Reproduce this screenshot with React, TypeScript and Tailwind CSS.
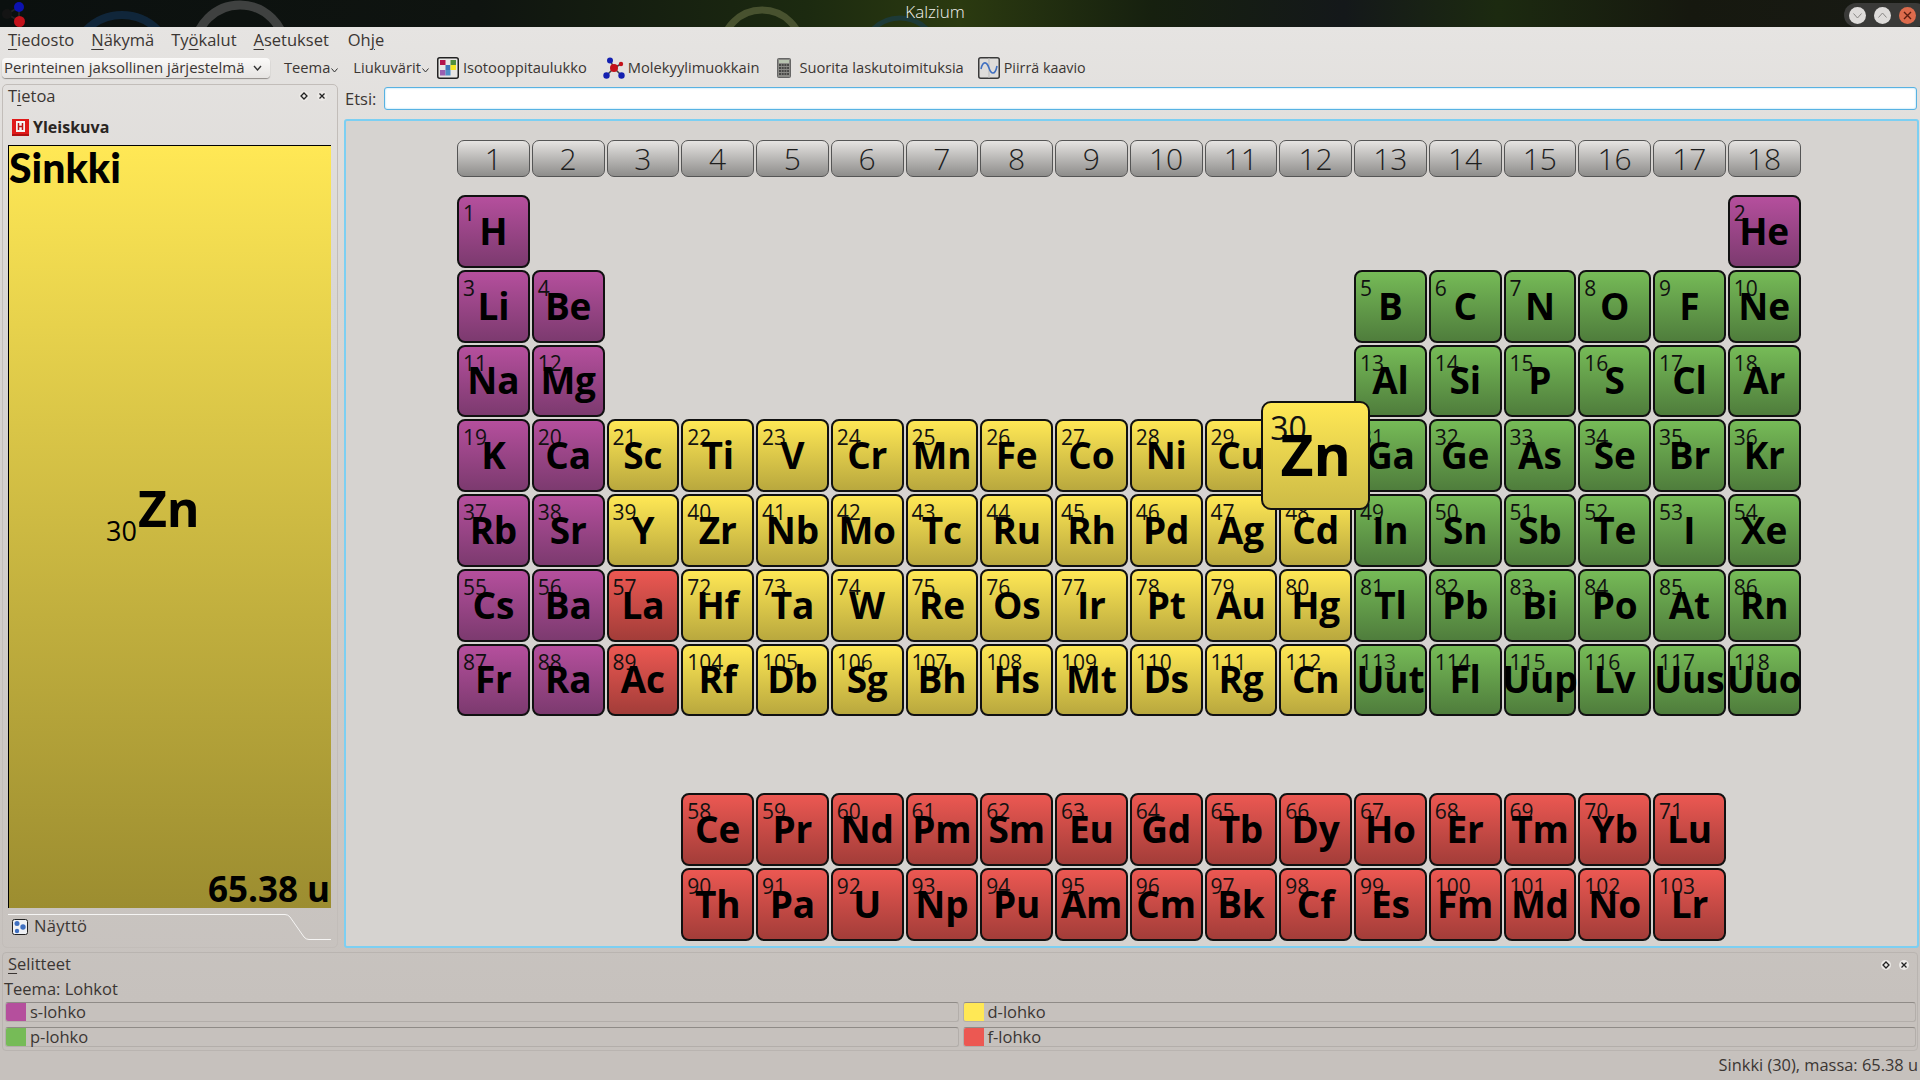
// Kalzium: jaksollinen järjestelmä
import type { ReactNode } from "react";

type Block = "s" | "p" | "d" | "f";
type Element = { sym: string; num: number; block: Block; row: number; col: number };

const BLOCK_BG: Record<Block, string> = {
  s: "bg-gradient-to-b from-[#b54f9d] to-[#7c3a6f]",
  p: "bg-gradient-to-b from-[#76bb57] to-[#4f7d3c]",
  d: "bg-gradient-to-b from-[#ffe855] to-[#b9a83e]",
  f: "bg-gradient-to-b from-[#ec5852] to-[#a33d39]",
};

const row = (r: number, startCol: number, startNum: number, block: Block, syms: string): Element[] =>
  syms.split(" ").map((sym, i) => ({ sym, num: startNum + i, block, row: r, col: startCol + i }));

const ELEMENTS: Element[] = [
  { sym: "H", num: 1, block: "s", row: 1, col: 1 },
  { sym: "He", num: 2, block: "s", row: 1, col: 18 },
  ...row(2, 1, 3, "s", "Li Be"),
  ...row(2, 13, 5, "p", "B C N O F Ne"),
  ...row(3, 1, 11, "s", "Na Mg"),
  ...row(3, 13, 13, "p", "Al Si P S Cl Ar"),
  ...row(4, 1, 19, "s", "K Ca"),
  ...row(4, 3, 21, "d", "Sc Ti V Cr Mn Fe Co Ni Cu Zn"),
  ...row(4, 13, 31, "p", "Ga Ge As Se Br Kr"),
  ...row(5, 1, 37, "s", "Rb Sr"),
  ...row(5, 3, 39, "d", "Y Zr Nb Mo Tc Ru Rh Pd Ag Cd"),
  ...row(5, 13, 49, "p", "In Sn Sb Te I Xe"),
  ...row(6, 1, 55, "s", "Cs Ba"),
  { sym: "La", num: 57, block: "f", row: 6, col: 3 },
  ...row(6, 4, 72, "d", "Hf Ta W Re Os Ir Pt Au Hg"),
  ...row(6, 13, 81, "p", "Tl Pb Bi Po At Rn"),
  ...row(7, 1, 87, "s", "Fr Ra"),
  { sym: "Ac", num: 89, block: "f", row: 7, col: 3 },
  ...row(7, 4, 104, "d", "Rf Db Sg Bh Hs Mt Ds Rg Cn"),
  ...row(7, 13, 113, "p", "Uut Fl Uup Lv Uus Uuo"),
  ...row(9, 4, 58, "f", "Ce Pr Nd Pm Sm Eu Gd Tb Dy Ho Er Tm Yb Lu"),
  ...row(10, 4, 90, "f", "Th Pa U Np Pu Am Cm Bk Cf Es Fm Md No Lr"),
];

const GROUPS = Array.from({ length: 18 }, (_, i) => i + 1);

// Alaviivattu pikanäppäin valikoissa
function Mnemonic({ pre = "", ch, post }: { pre?: string; ch: string; post: string }) {
  return (
    <span>
      {pre}
      <span className="underline decoration-1 underline-offset-[3px]">{ch}</span>
      {post}
    </span>
  );
}

function ElementCell({ el }: { el: Element }) {
  const selected = el.sym === "Zn";
  return (
    <div
      className={`relative flex items-center justify-center rounded-[8px] border-2 border-[#111] ${BLOCK_BG[el.block]}`}
      style={{ gridRow: el.row, gridColumn: el.col }}
    >
      <span className="absolute left-[4px] top-[3px] text-[21px] leading-[26px] text-[#111]">{el.num}</span>
      <span className="relative top-[-1px] whitespace-nowrap text-[37px] font-bold leading-none tracking-[-0.2px] text-black">{el.sym}</span>
      {selected && (
        <div className="absolute -inset-[20px] z-10 flex items-center justify-center rounded-[10px] border-2 border-[#111] bg-gradient-to-b from-[#ffe855] to-[#cdbb46]">
          <span className="absolute left-[7px] top-[5px] text-[32px] leading-[40px] text-[#111]">30</span>
          <span className="relative top-[-1px] text-[57px] font-bold leading-none text-black">Zn</span>
        </div>
      )}
    </div>
  );
}

function DockButtons() {
  return (
    <div className="flex items-center gap-[8px]">
      <svg width="10" height="10" viewBox="0 0 10 10">
        <circle cx="5" cy="5" r="5" fill="#ece9e6" />
        <path d="M5 2 L8 5 L5 8 L2 5 Z" fill="none" stroke="#222" strokeWidth="1.3" />
      </svg>
      <svg width="10" height="10" viewBox="0 0 10 10">
        <circle cx="5" cy="5" r="5" fill="#ece9e6" />
        <path d="M2.5 2.5 L7.5 7.5 M7.5 2.5 L2.5 7.5" stroke="#222" strokeWidth="1.3" />
      </svg>
    </div>
  );
}

function WinButton({ close, children }: { close?: boolean; children: ReactNode }) {
  return (
    <div className={`flex h-[17px] w-[17px] items-center justify-center rounded-full ${close ? "bg-[#dd6b4c]" : "bg-[#dedcda]"}`}>
      {children}
    </div>
  );
}

function TitleBar() {
  return (
    <div className="relative flex h-[27px] shrink-0 items-center justify-center overflow-hidden bg-[linear-gradient(90deg,#0b100f_0%,#0f1410_25%,#1c2a10_42%,#2b3a10_50%,#16200f_60%,#14181a_70%,#1c2a10_78%,#16180f_88%,#181a14_100%)]">
      {/* обои за заголовком */}
      <svg className="absolute left-0 top-0" width="1920" height="27" viewBox="0 0 1920 27">
        <circle cx="240" cy="50" r="45" fill="none" stroke="#3f4140" strokeWidth="9" />
        <circle cx="122" cy="65" r="50" fill="none" stroke="#10263a" strokeWidth="8" />
        <circle cx="762" cy="50" r="40" fill="none" stroke="#48522f" strokeWidth="7" />
        <circle cx="900" cy="56" r="38" fill="none" stroke="#1d3a38" strokeWidth="5" />
      </svg>
      <svg className="absolute left-0 top-0" width="26" height="27" viewBox="0 0 26 27">
        <path d="M7 14 L19 7 M7 14 L19 21 M19 7 L19 21" stroke="#222" strokeWidth="2" />
        <circle cx="7" cy="14" r="5" fill="#141414" />
        <circle cx="19" cy="7" r="5" fill="#0c12b0" />
        <circle cx="19.5" cy="21.5" r="5.5" fill="#c4121a" />
      </svg>
      <span className="relative mb-[3px] mr-[50px] text-[17px] font-light text-[#f2f2f0]">Kalzium</span>
      <div className="absolute right-[-8px] top-[3px] flex h-[24px] items-center gap-[8px] rounded-full bg-[#3a3a38] pl-[5px] pr-[12px]">
        <WinButton>
          <svg width="11" height="11" viewBox="0 0 11 11"><path d="M1.5 3.5 L5.5 8 L9.5 3.5" fill="none" stroke="#8a8886" strokeWidth="1" /></svg>
        </WinButton>
        <WinButton>
          <svg width="11" height="11" viewBox="0 0 11 11"><path d="M1.5 7.5 L5.5 3 L9.5 7.5" fill="none" stroke="#8a8886" strokeWidth="1" /></svg>
        </WinButton>
        <WinButton close>
          <svg width="11" height="11" viewBox="0 0 11 11"><path d="M2 2 L9 9 M9 2 L2 9" stroke="#5a1d10" strokeWidth="1.4" /></svg>
        </WinButton>
      </div>
    </div>
  );
}

function MenuBar() {
  return (
    <div className="flex h-[26px] shrink-0 items-center gap-[17px] pl-[8px] text-[16.5px] text-[#3b3633]">
      <Mnemonic ch="T" post="iedosto" />
      <Mnemonic ch="N" post="äkymä" />
      <Mnemonic pre="Ty" ch="ö" post="kalut" />
      <Mnemonic ch="A" post="setukset" />
      <span className="ml-[2px]">
        <Mnemonic pre="Oh" ch="j" post="e" />
      </span>
    </div>
  );
}

function Chevron() {
  return (
    <svg width="7" height="5" viewBox="0 0 7 5" className="mb-[-7px] ml-[1px]">
      <path d="M0.5 0.5 L3.5 4 L6.5 0.5" fill="none" stroke="#333" strokeWidth="1" />
    </svg>
  );
}

function ToolBar() {
  return (
    <div className="flex h-[31px] shrink-0 items-center pb-[2px] pl-[2px] text-[14.7px] text-[#3b3633]">
      <div className="flex h-[20px] w-[268px] items-center justify-between rounded-[4px] bg-gradient-to-b from-[#fbfaf9] to-[#e6e4e2] pl-[2px] pr-[8px] shadow-[0_1px_1px_#8f8c89]">
        <span className="whitespace-nowrap text-[15px]">Perinteinen jaksollinen järjestelmä</span>
        <svg width="9" height="6" viewBox="0 0 9 6"><path d="M1 1 L4.5 5 L8 1" fill="none" stroke="#333" strokeWidth="1.4" /></svg>
      </div>
      <span className="ml-[14px] flex items-center">Teema<Chevron /></span>
      <span className="ml-[15px] flex items-center">Liukuvärit<Chevron /></span>
      <svg className="ml-[8px]" width="22" height="22" viewBox="0 0 22 22">
        <rect x="0.75" y="0.75" width="20.5" height="20.5" rx="2" fill="#e8e6e4" stroke="#222" strokeWidth="1.5" />
        <rect x="3" y="3" width="5.5" height="5" fill="#b3134a" />
        <rect x="13.5" y="3" width="5.5" height="5" fill="#4f8f3c" />
        <rect x="8.5" y="8" width="5" height="5" fill="#3f76b8" />
        <rect x="13.5" y="8" width="5.5" height="5" fill="#f5e623" />
        <rect x="3" y="13" width="5.5" height="5.5" fill="#9a5fb0" />
        <rect x="8.5" y="13" width="5" height="5.5" fill="#4f8fc8" />
      </svg>
      <span className="ml-[4px]">Isotooppitaulukko</span>
      <svg className="ml-[16px]" width="22" height="22" viewBox="0 0 22 22">
        <path d="M11 11 L7 3 M11 11 L3 19 M11 11 L19 19 M11 11 L18 7" stroke="#444" strokeWidth="1.5" />
        <circle cx="7" cy="3.5" r="3" fill="#1420b0" />
        <circle cx="3.5" cy="18.5" r="3.2" fill="#1420b0" />
        <circle cx="18.5" cy="18.5" r="3.2" fill="#1420b0" />
        <circle cx="11" cy="11" r="4" fill="#c4121a" />
        <circle cx="18" cy="7" r="2.2" fill="#c4121a" />
      </svg>
      <span className="ml-[3px]">Molekyylimuokkain</span>
      <svg className="ml-[18px]" width="14" height="20" viewBox="0 0 14 20">
        <rect x="0.5" y="0.5" width="13" height="19" rx="1" fill="#8a8a86" stroke="#666" />
        <rect x="2" y="2" width="10" height="3" fill="#b8c4b0" />
        {[7, 10, 13, 16].map((y) => (
          <path key={y} d={`M2 ${y} H12`} stroke="#333" strokeWidth="1.6" strokeDasharray="2 0.7" />
        ))}
      </svg>
      <span className="ml-[8px]">Suorita laskutoimituksia</span>
      <svg className="ml-[14px]" width="22" height="22" viewBox="0 0 22 22">
        <rect x="0.75" y="0.75" width="20.5" height="20.5" rx="2" fill="#dedcda" stroke="#3a3a3a" strokeWidth="1.5" />
        <path d="M11 1 V21" stroke="#b9b9b9" />
        <path d="M3 12 C5 3 9 5 11 11 C13 17 17 19 19 9" fill="none" stroke="#3f6fc0" strokeWidth="1.6" />
      </svg>
      <span className="ml-[4px] text-[14.3px]">Piirrä kaavio</span>
    </div>
  );
}

function SidePanel() {
  return (
    <div className="flex w-[336px] shrink-0 flex-col rounded-[5px] border border-[#c2bdb9] pl-[5px]">
      <div className="flex h-[22px] items-center justify-between pr-[10px]">
        <Mnemonic pre="T" ch="i" post="etoa" />
        <DockButtons />
      </div>
      <div className="flex h-[38px] items-center gap-[4px] pl-[4px] pt-[2px]">
        <svg width="17" height="17" viewBox="0 0 17 17">
          <rect width="17" height="15" fill="#e01a1a" />
          <rect y="15" width="17" height="2" fill="#b01010" />
          <rect x="4" y="2" width="9" height="11" fill="#f5f5f5" />
          <path d="M6.5 4 V11 M10.5 4 V11 M6.5 7.5 H10.5" stroke="#c01515" strokeWidth="1.5" />
        </svg>
        <span className="text-[16px] font-bold text-[#2a2522]">Yleiskuva</span>
      </div>
      <div className="relative mr-[6px] h-[763px] border-l border-t border-black bg-gradient-to-b from-[#ffe855] to-[#9c8d30] text-black">
        <div className="font-['Lato','Open_Sans',sans-serif] text-[41px] font-black leading-[43px]">Sinkki</div>
        {/* подписи поверх градиента */}
        <div className="absolute left-[97px] top-[337px] flex items-end">
          <span className="mb-[-13px] text-[27px] leading-[30px]">30</span>
          <span className="ml-[1px] text-[50px] font-bold leading-[50px]">Zn</span>
        </div>
        <div className="absolute bottom-0 right-[1px] text-[35px] font-bold leading-[38px]">65.38 u</div>
      </div>
      <div className="relative mr-[6px] mt-[6px] flex h-[25px] items-center gap-[6px] pl-[4px] text-[16.5px] tracking-[0.3px]">
        <svg width="16" height="16" viewBox="0 0 16 16">
          <rect x="0.5" y="0.5" width="15" height="15" rx="2" fill="#eef0f4" stroke="#222" />
          <circle cx="5" cy="4.5" r="2.5" fill="#3f6fc0" />
          <circle cx="11" cy="8" r="2.7" fill="#3f6fc0" />
          <circle cx="5" cy="12" r="2.2" fill="#3f6fc0" />
        </svg>
        <span>Näyttö</span>
        <svg className="absolute left-0 top-0" width="324" height="26" viewBox="0 0 324 26">
          <path d="M0 0.5 H277 Q280 0.5 282 3 L296 23 Q298 25.5 301 25.5 H323" fill="none" stroke="#f6f5f4" strokeWidth="1" />
        </svg>
      </div>
    </div>
  );
}

function TablePanel() {
  return (
    <div className="flex min-w-0 flex-1 flex-col">
      <div className="flex h-[35px] items-start gap-[8px] pl-[7px] pr-[3px] pt-[3px]">
        <span className="leading-[23px]">Etsi:</span>
        <div className="h-[23px] flex-1 rounded-[3px] border border-[#58b2e2] bg-white shadow-[inset_0_0_2px_#8fd0f0]" />
      </div>
      <div className="ml-[6px] mr-[1px] flex-1 rounded-[3px] border-2 border-[#7ccff2] bg-[#d6d3d0] pl-[111px] pt-[19px]">
        <div className="grid grid-cols-[repeat(18,72.75px)] gap-[2px]">
          {GROUPS.map((g) => (
            <div
              key={g}
              className="flex h-[37px] items-center justify-center rounded-[7px] border border-[#555] bg-gradient-to-b from-[#e6e4e2] to-[#8e8d8b] text-[30px] font-light leading-none text-[#1e1e1e]"
            >
              {g}
            </div>
          ))}
        </div>
        <div className="mt-[18px] grid grid-cols-[repeat(18,72.75px)] grid-rows-[repeat(10,72.75px)] gap-[2px]">
          {ELEMENTS.map((el) => (
            <ElementCell key={el.num} el={el} />
          ))}
        </div>
      </div>
    </div>
  );
}

function LegendItem({ color, label }: { color: string; label: string }) {
  return (
    <div className="flex h-[20px] items-center rounded-[3px] border border-[#b3aeaa] border-t-[#8f8b87]">
      <div className={`h-full w-[20px] rounded-l-[2px] ${color}`} />
      <span className="ml-[4px] text-[16.5px] leading-none">{label}</span>
    </div>
  );
}

function LegendDock() {
  return (
    <div className="mx-[2px] mt-[4px] flex h-[99px] shrink-0 flex-col rounded-[4px] border border-[#b9b4b0] px-[1px]">
      <div className="flex h-[23px] items-center justify-between pl-[4px] pr-[7px]">
        <Mnemonic ch="S" post="elitteet" />
        <DockButtons />
      </div>
      <div className="h-[26px] leading-[26px]">Teema: Lohkot</div>
      <div className="grid grid-cols-2 gap-x-[4px] gap-y-[5px] pl-[1px]">
        <LegendItem color="bg-[#b54f9d]" label="s-lohko" />
        <LegendItem color="bg-[#ffe855]" label="d-lohko" />
        <LegendItem color="bg-[#76bb57]" label="p-lohko" />
        <LegendItem color="bg-[#ec5852]" label="f-lohko" />
      </div>
    </div>
  );
}

export default function App() {
  return (
    <div className="flex h-[1080px] w-[1920px] flex-col overflow-hidden bg-[linear-gradient(180deg,#e6e4e2_27px,#d9d6d3_300px,#c6c1bd_1000px)] font-['Open_Sans','Noto_Sans',sans-serif] text-[16.5px] text-[#3b3633]">
      <TitleBar />
      <MenuBar />
      <ToolBar />
      <div className="flex h-[864px] shrink-0 pl-[2px]">
        <SidePanel />
        <TablePanel />
      </div>
      <LegendDock />
      <div className="flex flex-1 items-center justify-end pr-[2px] text-[16.4px]">Sinkki (30), massa: 65.38 u</div>
    </div>
  );
}
